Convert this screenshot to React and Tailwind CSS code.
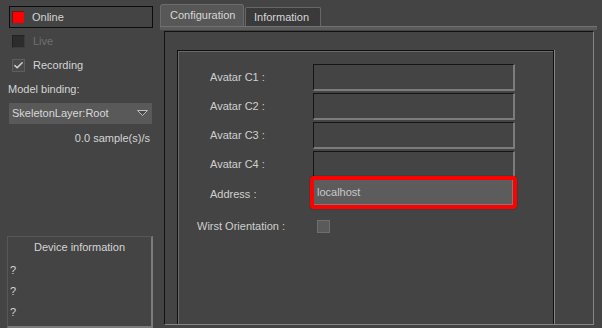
import { Check } from "lucide-react";

const font = { fontFamily: '"Liberation Sans", Arial, sans-serif' };

function InputBox() {
  return (
    <div className="h-[27px] w-[202px] border-t border-l border-[#151515] border-r-2 border-b-2 border-r-[#7c7c7c] border-b-[#7c7c7c] bg-[#444]" />
  );
}

function FieldRow({ label, children }) {
  return (
    <div className="flex items-center">
      <div className="w-[135px] pl-[32px] text-[11px] text-[#cfcfcf]">{label}</div>
      {children}
    </div>
  );
}

function LeftPanel() {
  return (
    <div className="flex h-full w-[160px] flex-col text-[11px] text-[#d4d4d4]">
      <div className="mt-[6px] ml-[9px] flex h-[22px] w-[144px] items-center gap-[8px] border border-[#0c0c0c] pl-[2px]">
        <div className="h-[12px] w-[12px] border-t border-l border-[#7a1010] bg-[#ff0000]" />
        <span>Online</span>
      </div>

      <div className="ml-[12px] mt-[1px] flex h-[24px] items-center gap-[8px]">
        <div className="h-[13px] w-[13px] border border-t-[#222] border-l-[#222] border-r-[#3c3c3c] border-b-[#3c3c3c] bg-[#2c2c2c]" />
        <span className="text-[#707070]">Live</span>
      </div>

      <div className="ml-[12px] flex h-[24px] items-center gap-[8px]">
        <div className="flex h-[13px] w-[13px] items-center justify-center border border-[#5e5e5e] bg-[#4a4a4a]">
          <Check size={11} strokeWidth={3} className="text-[#d8d8d8]" />
        </div>
        <span>Recording</span>
      </div>

      <div className="ml-[8px] flex h-[24px] items-center">Model binding:</div>

      <div className="mt-[2px] ml-[9px] flex h-[21px] w-[143px] items-center justify-between bg-[#595959] pl-[3px] pr-[4px]">
        <span className="text-[#d8d8d8]">SkeletonLayer:Root</span>
        <svg width="11" height="7" viewBox="0 0 11 7">
          <polygon points="0.5,0.5 10.5,0.5 5.5,5.5" fill="#4a4a4a" stroke="#bdbdbd" strokeWidth="1" />
        </svg>
      </div>

      <div className="mt-[4px] flex h-[20px] items-center justify-end pr-[10px]">0.0 sample(s)/s</div>

      <div className="mt-auto ml-[7px] flex h-[92px] w-[146px] flex-col border-t border-l border-[#575757] border-r-2 border-b-2 border-r-[#7a7a7a] border-b-[#7a7a7a]">
        <div className="flex h-[21px] items-center justify-center">Device information</div>
        <div className="mt-[2px] flex flex-col pl-[2px]">
          <div className="flex h-[21px] items-center">?</div>
          <div className="flex h-[21px] items-center">?</div>
          <div className="flex h-[21px] items-center">?</div>
        </div>
      </div>
    </div>
  );
}

function RightPanel() {
  return (
    <div className="flex h-full w-[442px] flex-col pt-[5px] text-[11px] text-[#d0d0d0]">
      <div className="flex h-[21px] items-end">
        <div className="flex h-[22px] w-[84px] items-center rounded-t-[3px] border border-b-0 border-[#6c6c6c] bg-[#575757] pl-[9px] pb-[1px] text-[#d6d6d6]">
          Configuration
        </div>
        <div className="ml-[1px] flex h-[19px] w-[76px] items-center rounded-t-[2px] border border-b-0 border-[#666] bg-[#3a3a3a] pl-[8px] text-[#d6d6d6]">
          Information
        </div>
      </div>

      <div className="h-[4px] w-[437px] border-t border-[#727272] bg-[#5a5a5a]" />

      <div className="mt-[1px] ml-[4px] flex h-[294px] w-[430px] flex-col border-t border-l border-[#121212] border-r border-b border-r-[#858585] border-b-[#858585] pl-[12px] pt-[18px]">
        <div className="flex w-[377px] flex-1 flex-col gap-[2px] border-t border-l border-r border-[#101010] pt-[13px] shadow-[inset_1px_1px_0_#6a6a6a,1px_0_0_#858585]">
          <FieldRow label="Avatar C1 :"><InputBox /></FieldRow>
          <FieldRow label="Avatar C2 :"><InputBox /></FieldRow>
          <FieldRow label="Avatar C3 :"><InputBox /></FieldRow>
          <FieldRow label="Avatar C4 :"><InputBox /></FieldRow>
          <FieldRow label="Address :">
            <div className="relative -mt-[4px] -ml-[3px] h-[33px] w-[207px] rounded-[4px] border-[4px] border-[#ff0000] shadow-[0_0_1px_#300]">
              <div className="flex h-full w-full items-center border-r border-b border-[#7a7a7a] bg-[#5c5c5c] pl-[3px] text-[#c9c9c9]">
                localhost
              </div>
            </div>
          </FieldRow>
          <div className="mt-[7px] flex items-center">
            <div className="w-[139px] pl-[19px] text-[#cfcfcf]">Wirst Orientation :</div>
            <div className="h-[13px] w-[13px] border border-[#6e6e6e] bg-[#5a5a5a]" />
          </div>
        </div>
      </div>
    </div>
  );
}

export default function App() {
  return (
    <div className="flex h-[328px] w-[602px] overflow-hidden bg-[#444444]" style={font}>
      <LeftPanel />
      <RightPanel />
    </div>
  );
}
